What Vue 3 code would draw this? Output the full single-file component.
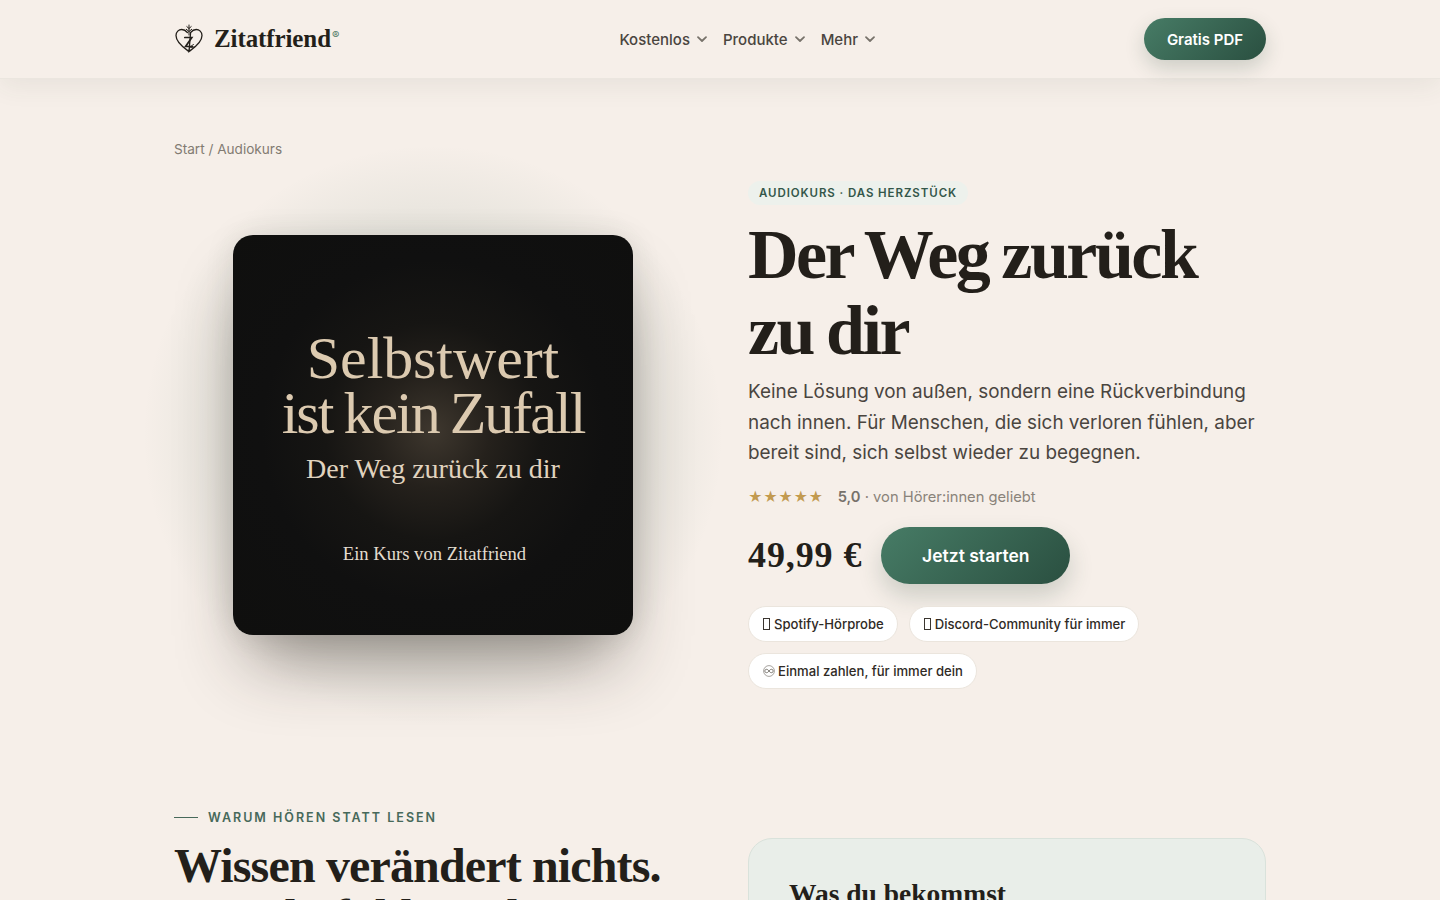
<script setup>
const nav = ['Kostenlos', 'Produkte', 'Mehr']
const pills = [
  { icon: 'box', label: 'Spotify-Hörprobe' },
  { icon: 'box', label: 'Discord-Community für immer' },
  { icon: 'loop', label: 'Einmal zahlen, für immer dein' }
]
</script>

<template>
  <div class="page">
    <header class="topbar">
      <div class="wrap topbar-inner">
        <a class="logo">
          <svg class="logo-mark" width="30" height="30" viewBox="0 0 30 30" fill="none" stroke="#231f1a" stroke-linecap="round">
            <path d="M15 27.500C11 24.500 2 19 2 11.500C2 7.800 4.700 5.500 7.800 5.500C10.300 5.500 12 6.800 13.400 8.500M16.600 8.500C18 6.800 19.700 5.500 22.200 5.500C25.300 5.500 28 7.800 28 11.500C28 19 19 24.500 15 27.500Z" stroke-width="1.300" />
            <path d="M15 11V1M15 4.500L12.800 2.600M15 4.500L17.200 2.600M15 7.500L12.300 5.300M15 7.500L17.700 5.300" stroke-width="1" />
            <path d="M10.800 13.500H17.800L11.600 22.500H18.500" stroke-width="1.700" />
            <path d="M15 26C15.500 23.500 17 21.800 19.500 20.500M17 23.500L20.500 23" stroke-width="0.900" />
          </svg>
          <span class="logo-name">Zitatfriend</span><span class="logo-reg">®</span>
        </a>
        <nav class="menu">
          <a v-for="item in nav" :key="item" class="menu-item">
            {{ item }}
            <svg width="12" height="12" viewBox="0 0 12 12" fill="none" stroke="#77726a" stroke-width="1.800" stroke-linecap="round" stroke-linejoin="round">
              <path d="M2 4.200L6 8L10 4.200" />
            </svg>
          </a>
        </nav>
        <a class="btn btn-small">Gratis PDF</a>
      </div>
    </header>

    <main class="wrap">
      <p class="crumbs">Start / Audiokurs</p>

      <section class="hero">
        <div class="cover-col">
          <div class="cover">
            <h2 class="cover-title"><span class="line-one">Selbstwert</span><span class="line-two">ist kein Zufall</span></h2>
            <p class="cover-sub">Der Weg zurück zu dir</p>
            <p class="cover-by">Ein Kurs von Zitatfriend</p>
          </div>
        </div>
        <div class="info">
          <span class="tag">AUDIOKURS · DAS HERZSTÜCK</span>
          <h1 class="title">Der Weg zurück<br>zu dir</h1>
          <p class="lead">Keine Lösung von außen, sondern eine Rückverbindung nach innen. Für Menschen, die sich verloren fühlen, aber bereit sind, sich selbst wieder zu begegnen.</p>
          <div class="rating">
            <span class="stars">★★★★★</span>
            <span class="rating-text"><b>5,0</b> · von Hörer:innen geliebt</span>
          </div>
          <div class="buy">
            <span class="price">49,99 €</span>
            <a class="btn btn-large">Jetzt starten</a>
          </div>
          <div class="pills">
            <span v-for="pill in pills" :key="pill.label" class="pill">
              <i v-if="pill.icon === 'box'" class="tofu"></i>
              <svg v-else class="loop" width="12" height="12" viewBox="0 0 12 12" fill="none" stroke="#6b665f">
                <circle cx="6" cy="6" r="5.400" stroke-width="0.600" />
                <path d="M6 6C5 4.600 4.200 4.300 3.400 4.300C2.500 4.300 1.900 5 1.900 6C1.900 7 2.500 7.700 3.400 7.700C4.200 7.700 5 7.400 6 6C7 4.600 7.800 4.300 8.600 4.300C9.500 4.300 10.100 5 10.100 6C10.100 7 9.500 7.700 8.600 7.700C7.800 7.700 7 7.400 6 6Z" stroke-width="0.900" />
              </svg>
              {{ pill.label }}
            </span>
          </div>
        </div>
      </section>

      <section class="why">
        <div>
          <p class="eyebrow"><i></i>WARUM HÖREN STATT LESEN</p>
          <h2 class="why-title">Wissen verändert nichts.<br>Was du fühlst, schon.</h2>
        </div>
        <div class="panel">
          <h3>Was du bekommst</h3>
        </div>
      </section>
    </main>
  </div>
</template>

<style>
body {
  background: #f6efe9;
}
</style>

<style scoped>
.page {
  font-family: Inter, "Liberation Sans", sans-serif;
  color: #231f1a;
  background: #f6efe9;
  min-height: 1200px;
}

.wrap {
  width: 1092px;
  margin: 0 auto;
}

.topbar {
  height: 78px;
  background: #f6efe9;
  border-bottom: 1px solid #ebe6df;
  box-shadow: 0 8px 24px rgba(60, 70, 55, 0.07);
  position: relative;
  z-index: 2;
}

.topbar-inner {
  height: 78px;
  display: flex;
  justify-content: space-between;
  align-items: center;
}

.logo {
  display: flex;
  align-items: center;
}

.logo-mark {
  margin-right: 10px;
}

.logo-name {
  font-family: "Liberation Serif", serif;
  font-weight: 700;
  font-size: 25px;
  letter-spacing: -0.100px;
}

.logo-reg {
  font-size: 11px;
  color: #4f7a66;
  margin: -8px 0 0 1px;
}

.menu {
  display: flex;
  gap: 15px;
  margin-left: 12px;
}

.menu-item {
  display: flex;
  align-items: center;
  gap: 6px;
  font-size: 15px;
  font-weight: 500;
  color: #4a453f;
}

.btn {
  display: flex;
  align-items: center;
  justify-content: center;
  color: #fff;
  font-weight: 600;
  border-radius: 999px;
  background: linear-gradient(135deg, #477c66, #2a4f40);
}

.btn-small {
  width: 122px;
  height: 42px;
  font-size: 15px;
  box-shadow: 0 8px 20px rgba(40, 70, 55, 0.2);
}

.crumbs {
  margin: 0;
  padding-top: 61px;
  font-size: 13.600px;
  line-height: 18px;
  color: #827b72;
}

.hero {
  display: grid;
  grid-template-columns: 518px 518px;
  gap: 56px;
  align-items: center;
  margin-top: 23px;
}

.cover-col {
  position: relative;
  display: flex;
  justify-content: center;
}

/* soft green halo behind the cover */
.cover-col::before {
  content: "";
  position: absolute;
  left: -40px;
  right: -40px;
  top: -90px;
  bottom: -90px;
  background: radial-gradient(circle 290px at 50% 50%, rgba(70, 110, 90, 0.1) 0%, rgba(70, 110, 90, 0.09) 70%, rgba(70, 110, 90, 0) 100%);
}

.cover {
  position: relative;
  width: 400px;
  height: 400px;
  border-radius: 20px;
  background: radial-gradient(circle at 50% 49%, #3e372e 0%, #25211c 20%, #161513 38%, #101010 60%, #0f0f0e 100%);
  box-shadow: 0 40px 70px -16px rgba(45, 38, 30, 0.46), 0 0 30px rgba(50, 60, 50, 0.1);
  box-sizing: border-box;
  padding-top: 96px;
  text-align: center;
  font-family: "Liberation Serif", serif;
}

.cover-title {
  margin: 0;
  font-weight: 400;
  font-size: 60px;
  line-height: 55px;
  color: #dccab0;
}

.line-one,
.line-two {
  display: block;
}

.line-one {
  letter-spacing: -0.100px;
}

.line-two {
  letter-spacing: -2px;
  word-spacing: -2px;
}

.cover-sub {
  margin: 10px 0 0;
  font-size: 28px;
  line-height: 36px;
  color: #e0d3bf;
}

.cover-by {
  margin: 55px 0 0;
  padding-left: 3px;
  font-size: 18.600px;
  line-height: 24px;
  color: #e3dccf;
}

.info {
  display: flex;
  flex-direction: column;
  align-items: flex-start;
}

.tag {
  padding: 4px 11px;
  border-radius: 999px;
  background: #edf1ec;
  font-size: 11.500px;
  line-height: 16px;
  font-weight: 600;
  letter-spacing: 0.920px;
  color: #34574a;
}

.title {
  margin: 12px 0 0;
  font-family: "Liberation Serif", serif;
  font-weight: 700;
  font-size: 70px;
  line-height: 75.600px;
  letter-spacing: -2.500px;
  word-spacing: -2px;
  color: #231f1a;
}

.lead {
  margin: 9px 0 0;
  font-size: 18.880px;
  line-height: 30.500px;
  color: #4a453f;
}

.rating {
  display: flex;
  align-items: center;
  gap: 14px;
  margin-top: 16px;
  font-size: 14.720px;
  line-height: 24px;
}

.stars {
  font-size: 14px;
  letter-spacing: 0.500px;
  color: #c29a4f;
}

.rating-text {
  color: #8a837a;
}

.rating-text b {
  font-weight: 600;
  color: #77716a;
}

.buy {
  display: flex;
  align-items: center;
  gap: 19px;
  margin-top: 18px;
}

.price {
  font-family: "Liberation Serif", serif;
  font-weight: 700;
  font-size: 36px;
  line-height: 44px;
  letter-spacing: 0.900px;
}

.btn-large {
  width: 189px;
  height: 57px;
  font-size: 17.500px;
  box-shadow: 0 12px 24px rgba(40, 70, 55, 0.2);
}

.pills {
  display: flex;
  flex-wrap: wrap;
  gap: 11px;
  margin-top: 22px;
}

.pill {
  display: flex;
  align-items: center;
  gap: 3px;
  padding: 9px 13px 9px 14px;
  border: 1px solid #ebe5dd;
  border-radius: 999px;
  background: #fff;
  font-size: 13.100px;
  line-height: 16px;
  font-weight: 500;
  color: #2f2a25;
}

/* missing-glyph box, the emoji font is absent in the original */
.tofu {
  width: 5px;
  height: 10px;
  margin-right: 1px;
  border: 1px solid #3a352f;
}

.why {
  display: grid;
  grid-template-columns: 518px 518px;
  gap: 56px;
  margin-top: 120px;
}

.eyebrow {
  display: flex;
  align-items: center;
  gap: 10px;
  margin: 0;
  font-size: 12.500px;
  line-height: 18px;
  font-weight: 600;
  letter-spacing: 2px;
  color: #47695a;
}

.eyebrow i {
  width: 24px;
  height: 1px;
  background: #47695a;
}

.why-title {
  margin: 13.500px 0 0;
  font-family: "Liberation Serif", serif;
  font-weight: 700;
  font-size: 48px;
  line-height: 51px;
  letter-spacing: -0.850px;
  white-space: nowrap;
}

.panel {
  margin-top: 29px;
  height: 300px;
  padding: 38px 40px 40px;
  box-sizing: border-box;
  border: 1px solid #d9e2db;
  border-radius: 24px;
  background: #e9eee9;
}

.panel h3 {
  margin: 0;
  font-family: "Liberation Serif", serif;
  font-size: 27.500px;
  line-height: 34px;
}
</style>
